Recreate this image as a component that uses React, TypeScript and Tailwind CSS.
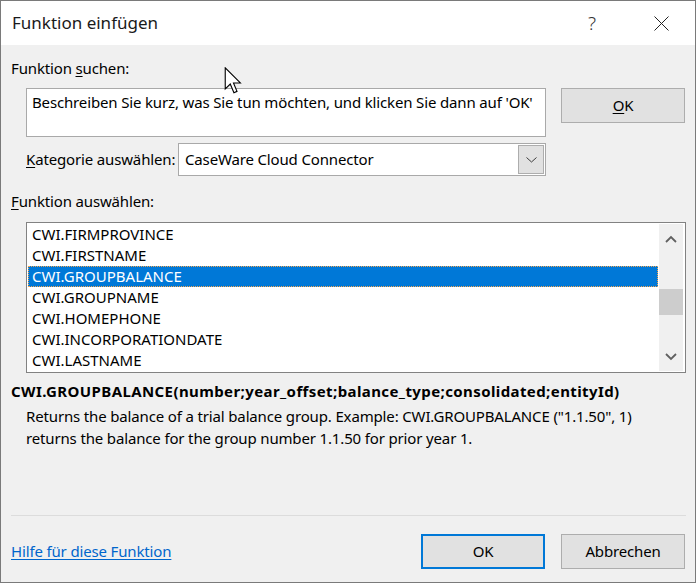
import React from 'react';

const items = [
  'CWI.FIRMPROVINCE',
  'CWI.FIRSTNAME',
  'CWI.GROUPBALANCE',
  'CWI.GROUPNAME',
  'CWI.HOMEPHONE',
  'CWI.INCORPORATIONDATE',
  'CWI.LASTNAME',
];

function Chevron({ up, className }: { up?: boolean; className?: string }) {
  return (
    <svg width="12" height="8" viewBox="0 0 12 8" className={className}>
      <path
        d={up ? 'M1 7 L6 2 L11 7' : 'M1 1 L6 6 L11 1'}
        fill="none"
        stroke="currentColor"
        strokeWidth="1.8"
      />
    </svg>
  );
}

function Cursor() {
  return (
    <svg
      width="19"
      height="28"
      viewBox="0 0 13 20"
      className="absolute left-[224px] top-[67px]"
    >
      <path
        d="M0.6 0.6 L0.6 15.6 L4.2 12.2 L6.8 18.4 L9 17.4 L6.5 11.4 L11.4 11.4 Z"
        fill="#ffffff"
        stroke="#000000"
        strokeWidth="0.8"
        strokeLinejoin="miter"
      />
    </svg>
  );
}

export default function App() {
  return (
    <div className="relative w-[697px] h-[583px] bg-white font-['Noto_Sans',sans-serif] text-[15px] tracking-[-0.15px] text-black">
      <div className="w-[696px] h-[583px] border border-[#7a7a7a] bg-[#f0f0f0] flex flex-col">
        {/* Title bar */}
        <div className="h-[44px] bg-white flex items-center pl-[11px] shrink-0">
          <span className="text-[17px] tracking-normal text-[#1a1a1a]">Funktion einfügen</span>
          <span className="ml-auto mr-[58px] text-[19px] font-light text-[#333]">?</span>
          <svg width="15" height="15" viewBox="0 0 15 15" className="mr-[26px]">
            <path d="M0.5 0.5 L14.5 14.5 M14.5 0.5 L0.5 14.5" stroke="#222" strokeWidth="1" />
          </svg>
        </div>

        {/* Body */}
        <div className="flex-1 flex flex-col px-[10px]">
          <div className="mt-[13px] h-[20px] leading-[20px]">
            Funktion <span className="underline underline-offset-2">s</span>uchen:
          </div>

          <div className="mt-[10px] flex items-start">
            <div className="ml-[15px] w-[520px] h-[49px] bg-white border border-[#a9a9a9] px-[5px] pt-[2px] leading-[22px] whitespace-nowrap overflow-hidden">
              Beschreiben Sie kurz, was Sie tun möchten, und klicken Sie dann auf 'OK'
            </div>
            <button className="ml-[15px] w-[124px] h-[35px] bg-[#e1e1e1] border border-[#adadad] flex items-center justify-center">
              <span>
                <span className="underline underline-offset-2">O</span>K
              </span>
            </button>
          </div>

          <div className="mt-[6px] flex items-center">
            <span className="ml-[15px] w-[152px] shrink-0 whitespace-nowrap">
              <span className="underline underline-offset-2">K</span>ategorie auswählen:
            </span>
            <div className="w-[368px] h-[33px] bg-white border border-[#a9a9a9] flex items-center p-[1px]">
              <span className="pl-[5px] flex-1 whitespace-nowrap">CaseWare Cloud Connector</span>
              <div className="w-[26px] h-full bg-[#e1e1e1] border border-[#adadad] flex items-center justify-center text-[#3c3c3c]">
                <svg width="11" height="6" viewBox="0 0 11 6">
                  <path d="M0.5 0.5 L5.5 5 L10.5 0.5" fill="none" stroke="currentColor" strokeWidth="1" />
                </svg>
              </div>
            </div>
          </div>

          <div className="mt-[15px] h-[20px] leading-[20px]">
            <span className="underline underline-offset-2">F</span>unktion auswählen:
          </div>

          {/* List box */}
          <div className="mt-[11px] ml-[15px] w-[660px] h-[151px] bg-white border border-[#828282] p-[1px] flex">
            <div className="w-[630px] flex flex-col tracking-normal">
              {items.map((it) =>
                it === 'CWI.GROUPBALANCE' ? (
                  <div
                    key={it}
                    className="h-[21px] leading-[19px] bg-[#0078d7] text-white pl-[3px] border border-dotted border-[#f5a650]"
                  >
                    {it}
                  </div>
                ) : (
                  <div key={it} className="h-[21px] leading-[21px] pl-[4px]">
                    {it}
                  </div>
                )
              )}
            </div>
            <div className="ml-[1px] w-[24px] bg-[#f0f0f0] flex flex-col">
              <div className="h-[30px] flex items-center justify-center text-[#606060]">
                <Chevron up />
              </div>
              <div className="flex-1">
                <div className="mt-[35px] h-[26px] bg-[#cdcdcd]" />
              </div>
              <div className="h-[28px] flex items-center justify-center text-[#606060]">
                <Chevron />
              </div>
            </div>
          </div>

          <div className="mt-[8px] h-[20px] leading-[20px] font-bold tracking-[0.4px] whitespace-nowrap">
            CWI.GROUPBALANCE(number;year_offset;balance_type;consolidated;entityId)
          </div>
          <div className="mt-[4px] ml-[15px] leading-[22px] whitespace-nowrap">
            <div>Returns the balance of a trial balance group. Example: CWI.GROUPBALANCE ("1.1.50", 1)</div>
            <div>returns the balance for the group number 1.1.50 for prior year 1.</div>
          </div>

          <div className="mt-auto h-px bg-[#dcdcdc] w-[675px]" />

          <div className="mt-[18px] mb-[13px] flex items-center">
            <a href="#" className="text-[#0066cc] underline underline-offset-2">
              Hilfe für diese Funktion
            </a>
            <button className="ml-auto w-[124px] h-[35px] bg-[#e1e1e1] border-2 border-[#0078d7]">OK</button>
            <button className="ml-[16px] w-[124px] h-[35px] bg-[#e1e1e1] border border-[#adadad]">
              Abbrechen
            </button>
          </div>
        </div>
      </div>
      <Cursor />
    </div>
  );
}
